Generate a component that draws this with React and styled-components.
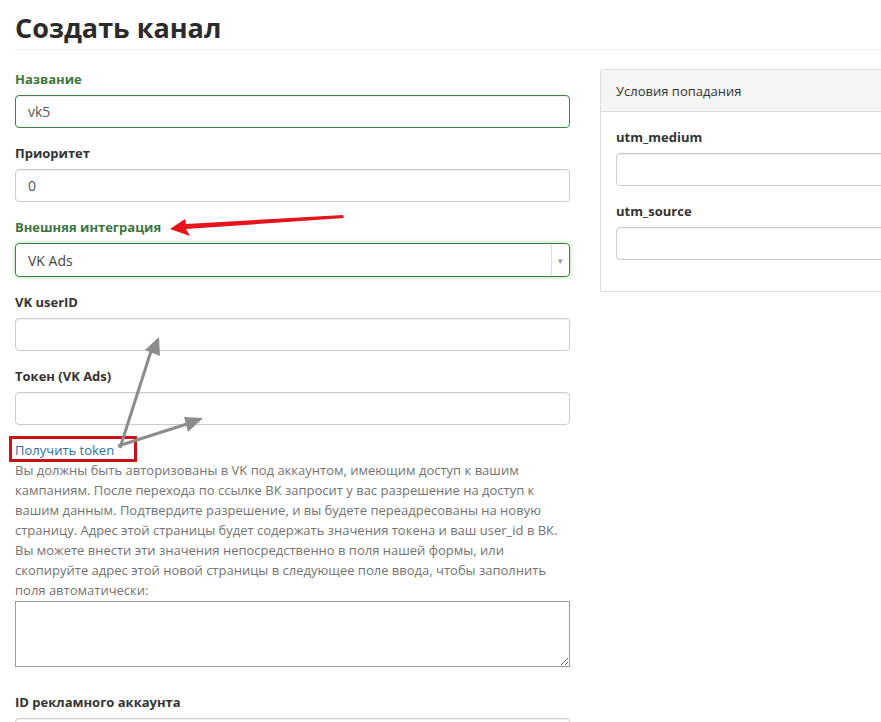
import React from "react";
import styled, { createGlobalStyle } from "styled-components";

const GlobalStyle = createGlobalStyle`
  html, body {
    margin: 0;
    padding: 0;
    background: #fff;
    overflow-x: hidden;
  }
  body {
    font-family: "Open Sans", "Noto Sans", sans-serif;
    color: #333;
  }
`;

const App = () => {
  return (
    <Page>
      <GlobalStyle />
      <Title>Создать канал</Title>
      <Row>
        <Column>
          <Group>
            <Label $success>Название</Label>
            <Input $success defaultValue="vk5" />
          </Group>
          <Group>
            <Label>Приоритет</Label>
            <Input defaultValue="0" />
          </Group>
          <Group>
            <Label $success>Внешняя интеграция</Label>
            <Select>
              <SelectValue>VK Ads</SelectValue>
              <SelectToggle>▾</SelectToggle>
            </Select>
          </Group>
          <Group>
            <Label>VK userID</Label>
            <Input />
          </Group>
          <Group>
            <Label>Токен (VK Ads)</Label>
            <Input />
          </Group>
          <TokenLink>
            Получить token
            <Highlight />
          </TokenLink>
          <Help>
            Вы должны быть авторизованы в VK под аккаунтом, имеющим доступ к вашим
            кампаниям. После перехода по ссылке ВК запросит у вас разрешение на доступ к
            вашим данным. Подтвердите разрешение, и вы будете переадресованы на новую
            страницу. Адрес этой страницы будет содержать значения токена и ваш user_id в ВК.
            Вы можете внести эти значения непосредственно в поля нашей формы, или
            скопируйте адрес этой новой страницы в следующее поле ввода, чтобы заполнить
            поля автоматически:
          </Help>
          <TextArea />
          <Group $top={26}>
            <Label>ID рекламного аккаунта</Label>
            <Input />
          </Group>
        </Column>
        <Column>
          <Panel>
            <PanelHeading>Условия попадания</PanelHeading>
            <PanelBody>
              <Group>
                <Label>utm_medium</Label>
                <Input />
              </Group>
              <Group>
                <Label>utm_source</Label>
                <Input />
              </Group>
            </PanelBody>
          </Panel>
        </Column>
      </Row>
      <Annotations width="881" height="722" viewBox="0 0 881 722">
        <polygon points="343,215 344,218 186,229 190,236 170,229 185,219 186,224" fill="#e3141b" />
        <polyline points="120,448 152,348" stroke="#8c8c8c" strokeWidth="3" fill="none" />
        <polygon points="159,337 160,356 145,350" fill="#8c8c8c" />
        <polyline points="118,446 190,423" stroke="#8c8c8c" strokeWidth="3" fill="none" />
        <polygon points="203,418 188,432 184,417" fill="#8c8c8c" />
      </Annotations>
    </Page>
  );
};

const Page = styled.div`
  position: relative;
  width: 1170px;
  padding: 0 15px;
  box-sizing: border-box;
`;

const Title = styled.h1`
  margin: 0;
  padding: 12px 0 5px;
  font-size: 27px;
  line-height: 32px;
  font-weight: 700;
  color: #2b2b2b;
  border-bottom: 1px solid #eee;
`;

const Row = styled.div`
  display: grid;
  grid-template-columns: 555px 555px;
  column-gap: 30px;
  padding-top: 20px;
`;

const Column = styled.div`
  display: flex;
  flex-direction: column;
`;

const Group = styled.div`
  display: flex;
  flex-direction: column;
  margin-top: ${(p) => p.$top || 0}px;
  margin-bottom: 16px;
`;

const Label = styled.label`
  font-size: 13px;
  line-height: 18px;
  font-weight: 700;
  margin-bottom: 7px;
  color: ${(p) => (p.$success ? "#3c763d" : "#333")};
`;

const Input = styled.input`
  box-sizing: border-box;
  width: 100%;
  height: 33px;
  padding: 0 12px;
  font-family: inherit;
  font-size: 14px;
  color: #555;
  border: 1px solid ${(p) => (p.$success ? "#3d8048" : "#ccc")};
  border-radius: 4px;
  box-shadow: inset 0 1px 1px rgba(0, 0, 0, 0.06);
  outline: none;
`;

const Select = styled.div`
  box-sizing: border-box;
  display: flex;
  align-items: stretch;
  height: 34px;
  border: 1px solid #3d8048;
  border-radius: 4px;
  box-shadow: 0 0 5px rgba(103, 177, 104, 0.55);
`;

const SelectValue = styled.div`
  flex: 1;
  display: flex;
  align-items: center;
  padding-left: 12px;
  font-size: 14px;
  color: #444;
`;

const SelectToggle = styled.div`
  width: 17px;
  display: flex;
  align-items: center;
  justify-content: center;
  border-left: 1px solid #ddd;
  font-size: 9px;
  color: #999;
`;

const TokenLink = styled.a`
  position: relative;
  align-self: flex-start;
  font-size: 13px;
  line-height: 18px;
  margin-top: 0;
  color: #2d6fa8;
  cursor: pointer;
`;

const Highlight = styled.span`
  position: absolute;
  left: -6px;
  top: -5px;
  width: 122px;
  height: 20px;
  border: 3px solid #cc1016;
`;

const Help = styled.p`
  margin: 1px 0 0;
  font-size: 13px;
  line-height: 20px;
  color: #737373;
`;

const TextArea = styled.textarea`
  box-sizing: border-box;
  width: 555px;
  height: 66px;
  margin: 1px 0 0;
  border: 1px solid #9b9b9b;
  border-radius: 0;
  font-family: inherit;
  resize: vertical;
`;

const Panel = styled.div`
  margin-top: -1px;
  border: 1px solid #ddd;
  border-radius: 2px;
`;

const PanelHeading = styled.div`
  height: 41px;
  display: flex;
  align-items: center;
  padding: 0 15px;
  background: #f5f5f5;
  border-bottom: 1px solid #ddd;
  font-size: 13px;
  color: #333;
`;

const PanelBody = styled.div`
  padding: 16px 15px 15px;
`;

const Annotations = styled.svg`
  position: absolute;
  left: 0;
  top: 0;
  pointer-events: none;
`;

export default App;
